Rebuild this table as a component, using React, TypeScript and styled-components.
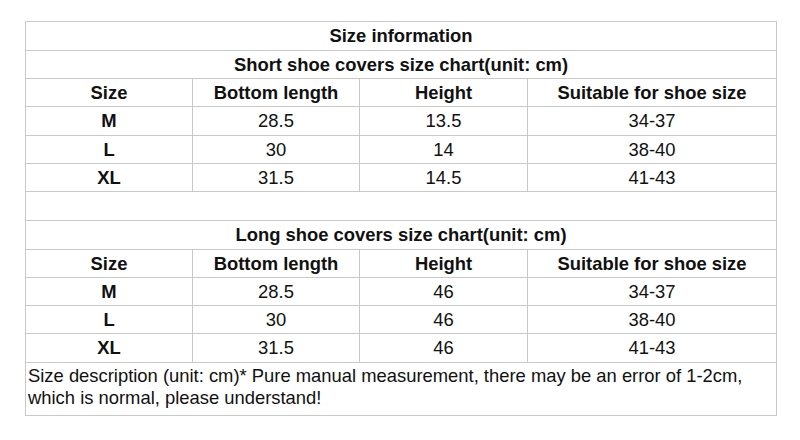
import React from 'react';
import styled, { createGlobalStyle } from 'styled-components';

const GlobalStyle = createGlobalStyle`
  html, body {
    margin: 0;
    padding: 0;
    background: #ffffff;
  }
  body {
    font-family: "Liberation Sans", Arial, sans-serif;
    color: #111111;
  }
`;

const Page = styled.div`
  width: 800px;
  height: 440px;
  padding: 21px 0 0 25px;
  box-sizing: border-box;
`;

const Table = styled.table`
  width: 751px;
  table-layout: fixed;
  border-collapse: collapse;
  font-size: 18.4px;
`;

const Row = styled.tr<{ $h: number }>`
  height: ${(p) => p.$h}px;
`;

const Cell = styled.td<{ $bold?: boolean }>`
  border: 1px solid #c9c9c9;
  padding: 0;
  text-align: center;
  vertical-align: middle;
  font-weight: ${(p) => (p.$bold ? 700 : 400)};
  line-height: 20px;
  white-space: nowrap;
`;

const Note = styled.td`
  border: 1px solid #c9c9c9;
  padding: 2px 0 6px 2px;
  text-align: left;
  font-size: 18.4px;
  line-height: 22px;
  color: #111111;
`;

type SizeRow = { size: string; bottom: string; height: string; shoe: string };

const shortRows: SizeRow[] = [
  { size: 'M', bottom: '28.5', height: '13.5', shoe: '34-37' },
  { size: 'L', bottom: '30', height: '14', shoe: '38-40' },
  { size: 'XL', bottom: '31.5', height: '14.5', shoe: '41-43' },
];

const longRows: SizeRow[] = [
  { size: 'M', bottom: '28.5', height: '46', shoe: '34-37' },
  { size: 'L', bottom: '30', height: '46', shoe: '38-40' },
  { size: 'XL', bottom: '31.5', height: '46', shoe: '41-43' },
];

const heights = [29, 28, 28, 29, 28, 28, 29, 29, 28, 28, 28, 29];

const Section = ({ title, rows, offset }: { title: string; rows: SizeRow[]; offset: number }) => (
  <>
    <Row $h={heights[offset]}>
      <Cell colSpan={4} $bold>{title}</Cell>
    </Row>
    <Row $h={heights[offset + 1]}>
      <Cell $bold>Size</Cell>
      <Cell $bold>Bottom length</Cell>
      <Cell $bold>Height</Cell>
      <Cell $bold>Suitable for shoe size</Cell>
    </Row>
    {rows.map((r, i) => (
      <Row key={r.size} $h={heights[offset + 2 + i]}>
        <Cell $bold>{r.size}</Cell>
        <Cell>{r.bottom}</Cell>
        <Cell>{r.height}</Cell>
        <Cell>{r.shoe}</Cell>
      </Row>
    ))}
  </>
);

export default function App() {
  return (
    <>
      <GlobalStyle />
      <Page>
        <Table>
          <colgroup>
            <col style={{ width: 167 }} />
            <col style={{ width: 167 }} />
            <col style={{ width: 168 }} />
            <col style={{ width: 249 }} />
          </colgroup>
          <tbody>
            <Row $h={heights[0]}>
              <Cell colSpan={4} $bold>Size information</Cell>
            </Row>
            <Section title="Short shoe covers size chart(unit: cm)" rows={shortRows} offset={1} />
            <Row $h={heights[6]}>
              <Cell colSpan={4} />
            </Row>
            <Section title="Long shoe covers size chart(unit: cm)" rows={longRows} offset={7} />
            <tr>
              <Note colSpan={4}>
                Size description (unit: cm)* Pure manual measurement, there may be an error of 1-2cm,
                <br />
                which is normal, please understand!
              </Note>
            </tr>
          </tbody>
        </Table>
      </Page>
    </>
  );
}
